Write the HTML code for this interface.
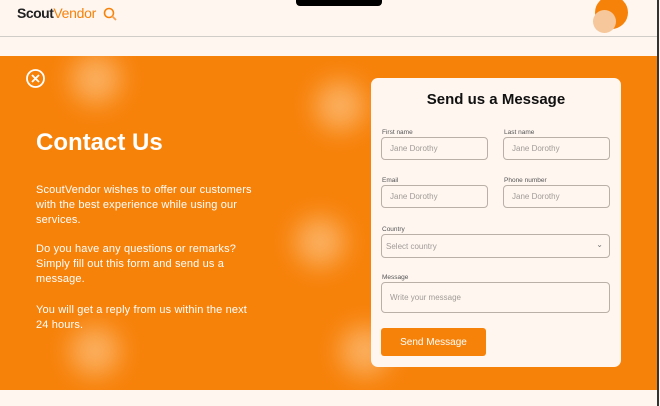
<!DOCTYPE html><html><head><style>
*{margin:0;padding:0;box-sizing:border-box}
body{width:660px;height:406px;overflow:hidden;background:#fff6f0;font-family:"Liberation Sans",sans-serif;position:relative}
.a{position:absolute}
.band{left:0;top:56px;width:657px;height:334px;background:#f7820a;overflow:hidden}
.blob{position:absolute;width:50px;height:50px;border-radius:50%;background:rgba(255,210,160,.55);filter:blur(12px)}
.card{left:371px;top:78px;width:250px;height:289px;background:#fff6f0;border-radius:7px}
.lbl{position:absolute;font-size:6.5px;color:#555}
.in{position:absolute;border:1px solid #bbb0a8;border-radius:4px;font-size:8px;color:#a09a96;padding-left:8px;display:flex;align-items:center}
p{color:#fff;font-size:11px;line-height:15px;letter-spacing:0.15px}
</style></head><body>
<div class="a" style="left:17px;top:5px;font-size:14px;font-weight:bold;letter-spacing:-0.5px;color:#222">Scout<span style="color:#f7820a;font-weight:normal;letter-spacing:-0.3px">Vendor</span></div>
<svg class="a" style="left:103px;top:6px" width="18" height="16"><circle cx="6" cy="7" r="4.5" fill="none" stroke="#f7820a" stroke-width="1.6"/><line x1="9" y1="10" x2="13" y2="14" stroke="#f7a050" stroke-width="1.8"/></svg>
<div class="a" style="left:296px;top:-6px;width:86px;height:12px;background:#000;border-radius:4px"></div>
<div class="a" style="left:595px;top:-4px;width:33px;height:33px;border-radius:50%;background:#f7820a"></div>
<div class="a" style="left:593px;top:10px;width:23px;height:23px;border-radius:50%;background:#f5c79a"></div>
<div class="a" style="left:0;top:36px;width:657px;height:1px;background:#d0ccc8"></div>
<div class="a" style="left:657px;top:0;width:2px;height:406px;background:#333"></div>
<div class="a band">
<div class="blob" style="left:71px;top:-2px"></div>
<div class="blob" style="left:315px;top:25px"></div>
<div class="blob" style="left:295px;top:161px"></div>
<div class="blob" style="left:70px;top:270px"></div>
<div class="blob" style="left:340px;top:270px"></div>
</div>
<svg class="a" style="left:25px;top:68px" width="21" height="21"><circle cx="10.5" cy="10.5" r="8.5" fill="none" stroke="#fff" stroke-width="1.8"/><path d="M7 7L14 14M14 7L7 14" stroke="#fff" stroke-width="1.8"/></svg>
<div class="a" style="left:36px;top:129px;font-size:24px;font-weight:bold;color:#fff">Contact Us</div>
<div class="a" style="left:36px;top:183px;width:222px">
<p>ScoutVendor wishes to offer our customers with the best experience while using our services.</p>
<p style="margin-top:14px">Do you have any questions or remarks? Simply fill out this form and send us a message.</p>
<p style="margin-top:16px">You will get a reply from us within the next 24 hours.</p>
</div>
<div class="a card">
<div class="a" style="left:0;width:250px;top:13px;text-align:center;font-size:15px;font-weight:bold;color:#111">Send us a Message</div>
<div class="lbl" style="left:11px;top:51px">First name</div>
<div class="lbl" style="left:133px;top:51px">Last name</div>
<div class="in" style="left:10px;top:59px;width:107px;height:23px">Jane Dorothy</div>
<div class="in" style="left:132px;top:59px;width:107px;height:23px">Jane Dorothy</div>
<div class="lbl" style="left:11px;top:99px">Email</div>
<div class="lbl" style="left:133px;top:99px">Phone number</div>
<div class="in" style="left:10px;top:107px;width:107px;height:23px">Jane Dorothy</div>
<div class="in" style="left:132px;top:107px;width:107px;height:23px">Jane Dorothy</div>
<div class="lbl" style="left:11px;top:148px">Country</div>
<div class="in" style="left:10px;top:156px;width:229px;height:24px;padding-left:4px">Select country<span style="position:absolute;right:6px;top:5px;font-size:8px;color:#777">⌄</span></div>
<div class="lbl" style="left:11px;top:196px">Message</div>
<div class="in" style="left:10px;top:204px;width:229px;height:31px">Write your message</div>
<div class="a" style="left:10px;top:250px;width:105px;height:28px;background:#f7820a;border-radius:3px;color:#fff;font-size:10px;display:flex;align-items:center;justify-content:center">Send Message</div>
</div>
</body></html>
